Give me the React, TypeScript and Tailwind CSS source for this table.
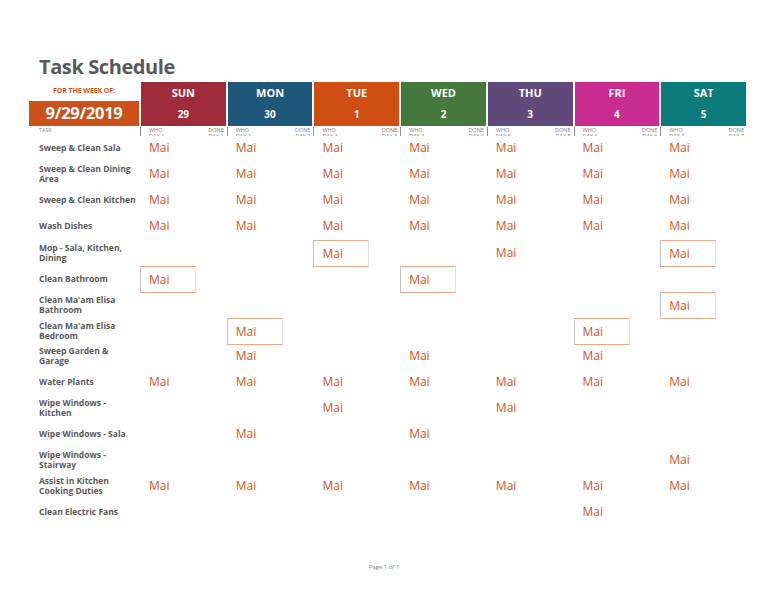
import React from "react";

const days = [
  { n: "SUN", d: "29", c: "bg-[#9f2b3b]" },
  { n: "MON", d: "30", c: "bg-[#1f577a]" },
  { n: "TUE", d: "1", c: "bg-[#cf4f13]" },
  { n: "WED", d: "2", c: "bg-[#44793b]" },
  { n: "THU", d: "3", c: "bg-[#5f4a7b]" },
  { n: "FRI", d: "4", c: "bg-[#c92b8e]" },
  { n: "SAT", d: "5", c: "bg-[#0c7b7b]" },
];

const rows: { task: string[]; cells: number[] }[] = [
  { task: ["Sweep & Clean Sala"], cells: [1, 1, 1, 1, 1, 1, 1] },
  { task: ["Sweep & Clean Dining", "Area"], cells: [1, 1, 1, 1, 1, 1, 1] },
  { task: ["Sweep & Clean Kitchen"], cells: [1, 1, 1, 1, 1, 1, 1] },
  { task: ["Wash Dishes"], cells: [1, 1, 1, 1, 1, 1, 1] },
  { task: ["Mop - Sala, Kitchen,", "Dining"], cells: [0, 0, 2, 0, 1, 0, 2] },
  { task: ["Clean Bathroom"], cells: [2, 0, 0, 2, 0, 0, 0] },
  { task: ["Clean Ma'am Elisa", "Bathroom"], cells: [0, 0, 0, 0, 0, 0, 2] },
  { task: ["Clean Ma'am Elisa", "Bedroom"], cells: [0, 2, 0, 0, 0, 2, 0] },
  { task: ["Sweep Garden &", "Garage"], cells: [0, 1, 0, 1, 0, 1, 0] },
  { task: ["Water Plants"], cells: [1, 1, 1, 1, 1, 1, 1] },
  { task: ["Wipe Windows -", "Kitchen"], cells: [0, 0, 1, 0, 1, 0, 0] },
  { task: ["Wipe Windows - Sala"], cells: [0, 1, 0, 1, 0, 0, 0] },
  { task: ["Wipe Windows -", "Stairway"], cells: [0, 0, 0, 0, 0, 0, 1] },
  { task: ["Assist in Kitchen", "Cooking Duties"], cells: [1, 1, 1, 1, 1, 1, 1] },
  { task: ["Clean Electric Fans"], cells: [0, 0, 0, 0, 0, 1, 0] },
];

export default function App() {
  return (
    <div className="w-[768px] h-[594px] bg-white overflow-hidden font-['Open_Sans',sans-serif]">
      <div className="pt-[52px] pl-[39px] text-[20px] leading-[30px] font-bold text-[#595959] tracking-[-0.4px]">
        Task Schedule
      </div>
      <div className="ml-[29px] w-[717px]">
        {/* header */}
        <div className="grid grid-cols-[110px_repeat(7,1fr)] gap-x-[2px] h-[44px]">
          <div className="flex flex-col">
            <div className="h-[19px] flex items-center justify-center text-[7px] font-bold text-[#d0561c] tracking-[-0.1px]">
              FOR THE WEEK OF:
            </div>
            <div className="flex-1 bg-[#cb5119] flex items-center justify-center text-white font-bold text-[16.5px] leading-none tracking-[-0.3px]">
              9/29/2019
            </div>
          </div>
          {days.map((d) => (
            <div key={d.n} className={`${d.c} flex flex-col items-center text-white font-bold`}>
              <div className="h-[19px] flex items-center text-[11px] leading-none pt-[1px]">{d.n}</div>
              <div className="flex-1 flex items-center text-[10px] leading-none">{d.d}</div>
            </div>
          ))}
        </div>
        {/* subheader */}
        <div className="grid grid-cols-[110px_repeat(7,1fr)] gap-x-[2px] h-[9px] text-[#7f7f7f] text-[5.5px] leading-[6px] uppercase">
          <div className="pl-[10px] pt-[1px]">TASK</div>
          {days.map((d, i) => (
            <div key={d.n} className="-ml-[1px] mt-[1px] h-[9px] border-l border-[#8c8c8c] flex justify-between pl-[8px] pr-[2px] overflow-hidden">
              <div>
                WHO
                <br />
                DAY {i + 1}
              </div>
              <div className="text-right">
                DONE
                <br />
                DAY {i + 1}
              </div>
            </div>
          ))}
        </div>
        {/* rows */}
        {rows.map((r, ri) => (
          <div key={ri} className="grid grid-cols-[110px_repeat(7,1fr)] gap-x-[2px] h-[26px]">
            <div className="pl-[10px] flex flex-col justify-center text-[8.5px] leading-[10px] font-bold text-[#595959] whitespace-nowrap">
              {r.task.map((t, ti) => (
                <div key={ti}>{t}</div>
              ))}
            </div>
            {r.cells.map((c, ci) => (
              <div key={ci} className="flex items-center">
                {c === 1 && <span className="pl-[8px] text-[12px] text-[#d0561c] leading-none">Mai</span>}
                {c === 2 && (
                  <div className="-ml-[1px] w-[56px] h-[27px] mt-[1px] border border-[#eaa887] border-l-[#c4c4c4] border-r-[#e0e0e0] flex items-center pl-[8px] text-[12px] text-[#d0561c] leading-none">
                    Mai
                  </div>
                )}
              </div>
            ))}
          </div>
        ))}
      </div>
      <div className="mt-[38px] text-center text-[6px] text-[#7f7f7f]">Page 1 of 1</div>
    </div>
  );
}
